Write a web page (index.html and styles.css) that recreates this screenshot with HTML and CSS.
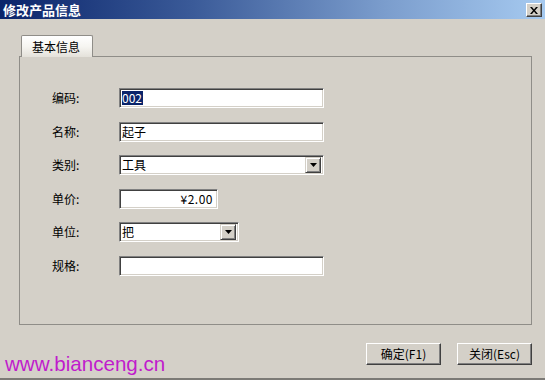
FILE: index.html
```html
<!DOCTYPE html>
<html lang="zh-CN">
<head>
<meta charset="utf-8">
<title>修改产品信息</title>
<link rel="stylesheet" href="styles.css">
</head>
<body>
<div class="window">
  <div class="titlebar">
    <span class="title">修改产品信息</span>
    <span class="close">
      <svg width="8" height="7" viewBox="0 0 8 7"><path d="M0 0h2l2 2.5L6 0h2L5 3.5 8 7H6L4 4.5 2 7H0l3-3.5z" fill="#000"/></svg>
    </span>
  </div>
  <div class="content">
    <div class="tabs"><div class="tab">基本信息</div></div>
    <div class="panel">
      <div class="form">
        <div class="row"><span class="label">编码:</span><div class="field w-long"><span class="sel">002</span></div></div>
        <div class="row"><span class="label">名称:</span><div class="field w-long">起子</div></div>
        <div class="row"><span class="label">类别:</span><div class="field combo w-long"><span class="val">工具</span><span class="drop"><svg width="7" height="4" viewBox="0 0 7 4"><path d="M0 0h7L3.5 4z" fill="#000"/></svg></span></div></div>
        <div class="row"><span class="label">单价:</span><div class="field w-price num">¥2.00</div></div>
        <div class="row"><span class="label">单位:</span><div class="field combo w-unit"><span class="val">把</span><span class="drop"><svg width="7" height="4" viewBox="0 0 7 4"><path d="M0 0h7L3.5 4z" fill="#000"/></svg></span></div></div>
        <div class="row"><span class="label">规格:</span><div class="field w-long"></div></div>
      </div>
    </div>
  </div>
  <div class="footer">
    <span class="watermark">www.bianceng.cn</span>
    <div class="buttons">
      <button class="btn" type="button">确定(F1)</button>
      <button class="btn" type="button">关闭(Esc)</button>
    </div>
  </div>
</div>
</body>
</html>
```
FILE: styles.css
```css
* { box-sizing: border-box; }
html, body { margin: 0; padding: 0; }
body {
  font-family: "Noto Sans CJK SC", "Liberation Sans", sans-serif;
  font-size: 12px;
  color: #000;
  background: #d4d0c8;
}
.window {
  width: 545px;
  height: 380px;
  background: #d4d0c8;
  display: flex;
  flex-direction: column;
  border-bottom: 2px solid #7c7a76;
}
.titlebar {
  height: 19px;
  background: linear-gradient(to right, #0a246a 0%, #3a5a98 35%, #7a9ccc 70%, #a6caf0 100%);
  display: flex;
  align-items: center;
  justify-content: space-between;
  padding: 0 3px 0 3px;
}
.title {
  color: #fff;
  font-weight: bold;
  font-size: 13px;
  line-height: 19px;
}
.close {
  width: 16px;
  height: 14px;
  margin-top: 1px;
  background: #d4d0c8;
  border-top: 1px solid #fff;
  border-left: 1px solid #fff;
  border-right: 1px solid #404040;
  border-bottom: 1px solid #404040;
  box-shadow: inset -1px -1px #808080;
  display: flex;
  align-items: center;
  justify-content: center;
}
.content {
  padding: 16px 13px 0 19px;
}
.tabs {
  display: flex;
  padding-left: 2px;
  position: relative;
  z-index: 1;
  margin-bottom: -1px;
}
.tab {
  width: 72px;
  height: 22px;
  border: 1px solid #8f8d88;
  border-bottom: none;
  border-radius: 2px 2px 0 0;
  background: linear-gradient(to bottom, #ffffff 0%, #f6f5f1 50%, #e4e1da 100%);
  text-align: center;
  line-height: 21px;
  padding-right: 2px;
}
.panel {
  width: 513px;
  height: 269px;
  border: 1px solid #8f8d88;
  background: #d4d0c8;
  padding: 31px 0 0 32px;
}
.form {
  display: flex;
  flex-direction: column;
  gap: 13.6px;
}
.row {
  display: flex;
  align-items: center;
  height: 20px;
}
.label {
  width: 67px;
  line-height: 20px;
}
.field {
  height: 20px;
  background: #fff;
  border-top: 1px solid #808080;
  border-left: 1px solid #808080;
  border-right: 1px solid #fff;
  border-bottom: 1px solid #fff;
  box-shadow: inset 1px 1px #404040, inset -1px -1px #d4d0c8;
  padding: 0 2px;
  line-height: 18px;
  display: flex;
  align-items: center;
  white-space: nowrap;
}
.w-long { width: 205px; }
.w-price { width: 99px; }
.w-unit { width: 120px; }
.num { justify-content: flex-end; padding-right: 4px; letter-spacing: 0.5px; }
.sel {
  background: #0a246a;
  color: #fff;
  line-height: 14px;
  padding: 0 1px 0 0;
}
.combo { justify-content: space-between; padding-right: 2px; }
.drop {
  width: 16px;
  height: 16px;
  background: #d4d0c8;
  border-top: 1px solid #d4d0c8;
  border-left: 1px solid #d4d0c8;
  border-right: 1px solid #404040;
  border-bottom: 1px solid #404040;
  box-shadow: inset 1px 1px #fff, inset -1px -1px #808080;
  display: flex;
  align-items: center;
  justify-content: center;
}
.footer {
  display: flex;
  justify-content: space-between;
  align-items: flex-start;
  padding: 18px 13px 0 5px;
}
.watermark {
  font-family: "Liberation Sans", Arial, sans-serif;
  font-size: 20.6px;
  line-height: 20px;
  color: #c01ccc;
  margin-top: 11px;
}
.buttons {
  display: flex;
  gap: 16px;
}
.btn {
  width: 75px;
  height: 22px;
  font-family: "Noto Sans CJK SC", "Liberation Sans", sans-serif;
  font-size: 12px;
  color: #000;
  background: #d4d0c8;
  border-top: 1px solid #fff;
  border-left: 1px solid #fff;
  border-right: 1px solid #404040;
  border-bottom: 1px solid #404040;
  box-shadow: inset -1px -1px #808080;
  padding: 0;
  line-height: 20px;
}
```
